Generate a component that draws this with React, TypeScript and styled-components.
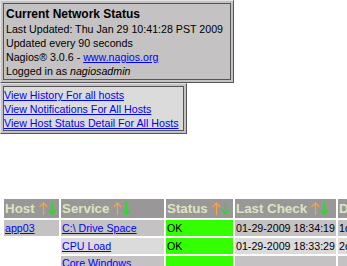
import React from 'react';
import styled, { createGlobalStyle } from 'styled-components';

const Global = createGlobalStyle`
  html, body { margin: 0; padding: 0; background: #ffffff; overflow: hidden; }
  body { font-family: "Liberation Sans", Arial, sans-serif; color: #000000; }
  a { color: #0000ff; text-decoration: underline; }
`;

const Page = styled.div`
  display: flex;
  flex-direction: column;
  align-items: flex-start;
`;

const BoxOuter = styled.div<{ $bg: string }>`
  background: ${(p) => p.$bg};
  border: 1px solid;
  border-color: #e2e2e2 #555555 #555555 #e2e2e2;
  padding: 2px;
`;

const InfoInner = styled.div`
  border: 1px solid #555555;
  padding: 2px 7px 1px 2px;
  background: #c4c2c2;
`;

const InfoTitle = styled.div`
  font-weight: bold;
  font-size: 12px;
  line-height: 16px;
  white-space: nowrap;
`;

const InfoLine = styled.div`
  font-size: 10.67px;
  line-height: 14px;
  white-space: nowrap;
`;

const LinkInner = styled.div`
  border: 1px solid #555555;
  padding: 1px 4px 0 0;
  background: #dbdbdb;
`;

const LinkLine = styled.a`
  display: block;
  font-size: 10.67px;
  line-height: 14px;
  white-space: nowrap;
`;

const Table = styled.table`
  margin-top: 63px;
  margin-left: 2px;
  border-spacing: 2px;
  table-layout: fixed;
  width: 459px;
`;

const Th = styled.th<{ $w: number }>`
  width: ${(p) => p.$w}px;
  height: 19px;
  padding: 0 0 0 1px;
  background: #999797;
  color: #dce5c1;
  font-weight: bold;
  font-size: 13.33px;
  text-align: left;
  white-space: nowrap;
  overflow: hidden;
  vertical-align: middle;
`;

const Td = styled.td<{ $bg: string }>`
  height: 16px;
  padding: 0 0 0 1px;
  background: ${(p) => p.$bg};
  font-size: 10.67px;
  line-height: 14px;
  vertical-align: middle;
  overflow: hidden;
`;

const Arrows = styled.span`
  display: inline-flex;
  vertical-align: -2px;
  margin-left: 4px;
`;

const UpArrow = () => (
  <svg width="9" height="13" viewBox="0 0 9 13">
    <path d="M4.5 1 V13 M0.6 5.2 L4.5 1 L8.4 5.2" fill="none" stroke="#f7a545" strokeWidth="1.2" />
  </svg>
);

const DownArrow = () => (
  <svg width="9" height="13" viewBox="0 0 9 13">
    <path d="M4.5 0 V12 M0.6 7.8 L4.5 12 L8.4 7.8" fill="none" stroke="#22dd22" strokeWidth="1.2" />
  </svg>
);

const Sort = () => (
  <Arrows>
    <UpArrow />
    <DownArrow />
  </Arrows>
);

const EVEN = '#c4c2c2';
const ODD = '#dbdbdb';
const OK = '#33ff00';
const WHITE = '#ffffff';

const rows = [
  { host: 'app03', service: 'C:\\ Drive Space', status: 'OK', last: '01-29-2009 18:34:19', dur: '1d 4h 12m 9s', bg: EVEN },
  { host: '', service: 'CPU Load', status: 'OK', last: '01-29-2009 18:33:29', dur: '2d 1h 40m 2s', bg: ODD },
  { host: '', service: 'Core Windows Services', status: 'OK', last: '01-29-2009 18:32:09', dur: '3d 2h 5m 1s', bg: EVEN },
];

export default function App() {
  return (
    <Page>
      <Global />
      <BoxOuter $bg="#c4c2c2">
        <InfoInner>
          <InfoTitle>Current Network Status</InfoTitle>
          <InfoLine>Last Updated: Thu Jan 29 10:41:28 PST 2009</InfoLine>
          <InfoLine>Updated every 90 seconds</InfoLine>
          <InfoLine>
            Nagios® 3.0.6 - <a href="#">www.nagios.org</a>
          </InfoLine>
          <InfoLine>
            Logged in as <i>nagiosadmin</i>
          </InfoLine>
        </InfoInner>
      </BoxOuter>
      <BoxOuter $bg="#c4c2c2">
        <LinkInner>
          <LinkLine href="#">View History For all hosts</LinkLine>
          <LinkLine href="#">View Notifications For All Hosts</LinkLine>
          <LinkLine href="#">View Host Status Detail For All Hosts</LinkLine>
        </LinkInner>
      </BoxOuter>
      <Table>
        <thead>
          <tr>
            <Th $w={54}>Host<Sort /></Th>
            <Th $w={102}>Service<Sort /></Th>
            <Th $w={66}>Status<Sort /></Th>
            <Th $w={100}>Last Check<Sort /></Th>
            <Th $w={120}>Duration<Sort /></Th>
          </tr>
        </thead>
        <tbody>
          {rows.map((r, i) => (
            <tr key={i}>
              <Td $bg={r.host ? r.bg : WHITE}>{r.host && <a href="#">{r.host}</a>}</Td>
              <Td $bg={r.bg}><a href="#">{r.service}</a></Td>
              <Td $bg={OK}>{r.status}</Td>
              <Td $bg={r.bg}>{r.last}</Td>
              <Td $bg={r.bg}>{r.dur}</Td>
            </tr>
          ))}
        </tbody>
      </Table>
    </Page>
  );
}
